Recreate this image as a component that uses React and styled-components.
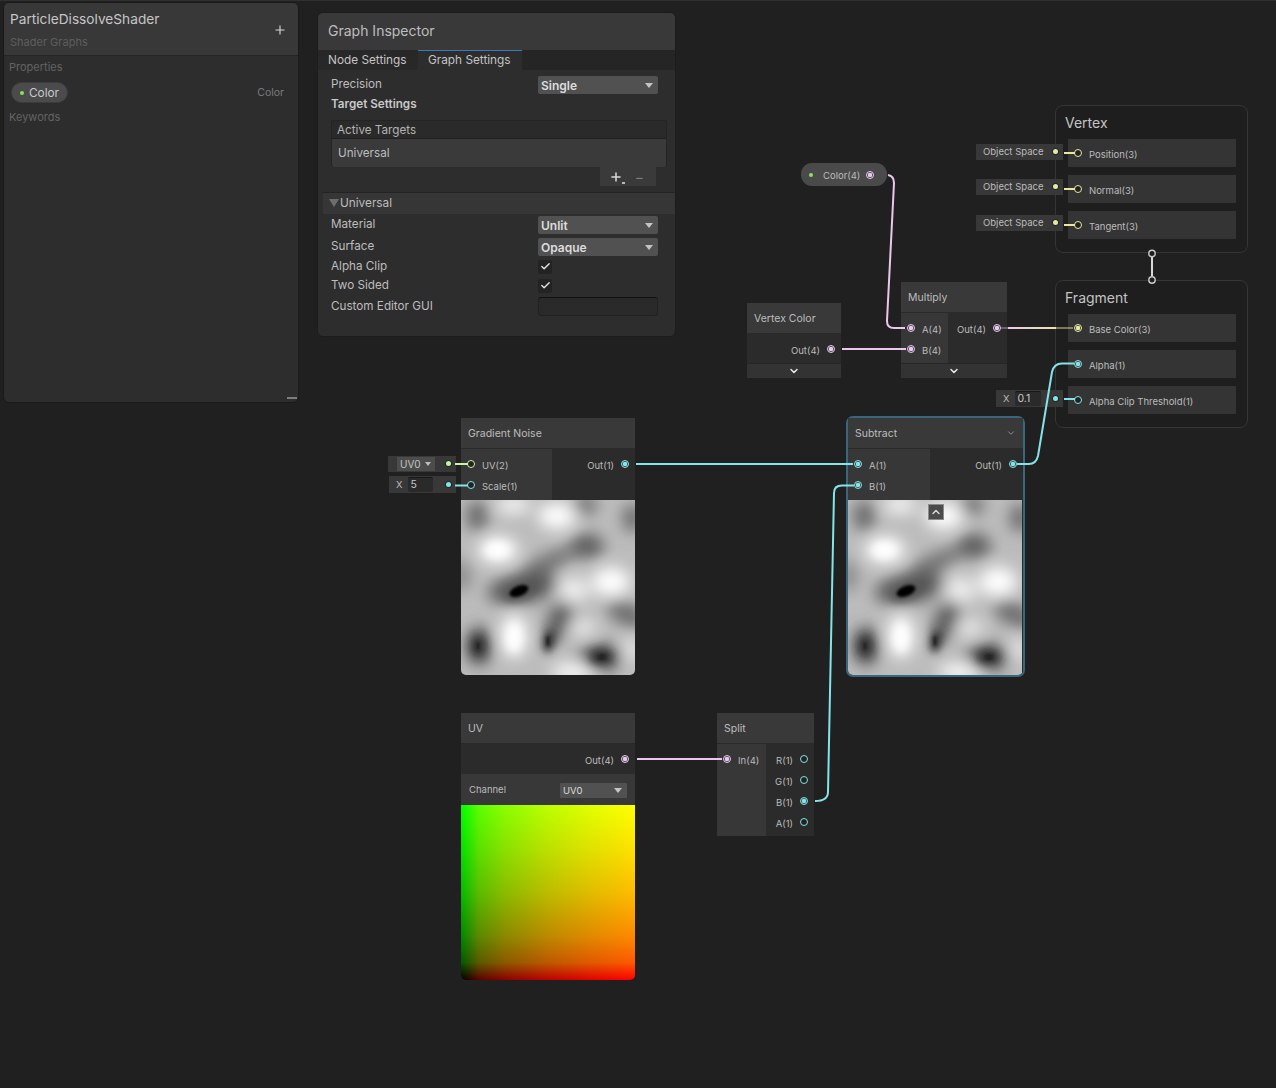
import React from 'react';
import styled, { createGlobalStyle } from 'styled-components';
import { Check, ChevronDown, ChevronUp, Plus } from 'lucide-react';

const PINK = '#ecc6ec';
const TEAL = '#84e4e7';
const YELLOW = '#e8e8a0';
const GREEN = '#cbf3a4';

const GlobalStyle = createGlobalStyle`
  html, body {
    margin: 0;
    background: #202020;
  }
  * {
    box-sizing: border-box;
  }
`;

const Canvas = styled.div`
  position: relative;
  width: 1276px;
  height: 1088px;
  overflow: hidden;
  background: #202020;
  border-top: 1px solid #2f2f2f;
  font-family: Inter, 'Noto Sans', sans-serif;
  color: #c4c4c4;
`;

const WireLayer = styled.svg`
  position: absolute;
  top: -1px;
  left: 0;
  z-index: 2;
  pointer-events: none;
`;

/* blackboard */
const Blackboard = styled.div`
  position: absolute;
  left: 3px;
  top: 1px;
  width: 296px;
  height: 401px;
  background: #2d2d2d;
  border: 1px solid #1a1a1a;
  border-radius: 6px;
  overflow: hidden;
  z-index: 3;
`;

const BoardHeader = styled.div`
  position: relative;
  height: 53px;
  padding: 7px 6px 0;
  background: #383838;
  border-bottom: 1px solid #252525;
`;

const BoardTitle = styled.div`
  font-size: 13.7px;
  line-height: 18px;
  color: #c6c6c6;
`;

const BoardSub = styled.div`
  margin-top: 7px;
  font-size: 11px;
  line-height: 14px;
  color: #5e5e5e;
`;

const AddButton = styled.div`
  position: absolute;
  right: 11px;
  top: 20px;
  display: flex;
  color: #d4d4d4;
`;

const SectionLabel = styled.div`
  margin-top: ${p => p.$top || 0}px;
  padding-left: 5px;
  font-size: 11px;
  line-height: 14px;
  color: #636363;
`;

const PropertyRow = styled.div`
  display: flex;
  align-items: center;
  justify-content: space-between;
  margin: 8px 0 7px;
  padding: 0 14px 0 7px;
`;

const Pill = styled.div`
  display: flex;
  align-items: center;
  gap: 5px;
  width: 57px;
  height: 21px;
  padding-left: 8px;
  border-radius: 11px;
  background: #4b4b4b;
  border: 1px solid #3c3c3c;
  font-size: 11.8px;
  color: #c9c9c9;
`;

const GreenDot = styled.span`
  width: 4px;
  height: 4px;
  border-radius: 50%;
  background: #8fe05e;
`;

const PropertyType = styled.span`
  font-size: 10.5px;
  color: #7a7a7a;
`;

const ResizeGrip = styled.div`
  position: absolute;
  right: 1px;
  bottom: 3px;
  width: 10px;
  height: 2px;
  background: #7c7c7c;
`;

/* graph inspector */
const Inspector = styled.div`
  position: absolute;
  left: 317px;
  top: 11px;
  width: 359px;
  height: 325px;
  background: #2d2d2d;
  border: 1px solid #1c1c1c;
  border-radius: 6px;
  overflow: hidden;
  z-index: 3;
`;

const InspectorHeader = styled.div`
  height: 37px;
  padding-left: 10px;
  background: #393939;
  font-size: 14px;
  line-height: 36px;
  color: #bdbdbd;
`;

const Tabs = styled.div`
  display: flex;
  height: 20px;
  background: #252525;
`;

const Tab = styled.div`
  width: ${p => p.$w}px;
  padding-left: 10px;
  font-size: 11.8px;
  line-height: 19px;
  color: #c4c4c4;
  background: ${p => (p.$active ? '#2d2d2d' : '#282828')};
  border-top: 1px solid ${p => (p.$active ? '#3a79bb' : 'transparent')};
`;

const Field = styled.div`
  display: grid;
  grid-template-columns: 207px 120px;
  align-items: center;
  height: ${p => p.$h || 18}px;
  margin-top: ${p => p.$top || 0}px;
  padding-left: 13px;
  font-size: 11.7px;
  color: #bdbdbd;
  & > span {
    margin-top: -2px;
  }
`;

const SectionTitle = styled.div`
  height: 20px;
  padding-left: 13px;
  font-size: 11.7px;
  font-weight: 600;
  line-height: 20px;
  color: #c8c8c8;
`;

const Dropdown = styled.div`
  display: flex;
  align-items: center;
  justify-content: space-between;
  height: 18px;
  padding: 0 4px 0 3px;
  background: #515151;
  border-radius: 2px;
  font-size: ${p => p.$size || 12}px;
  font-weight: ${p => p.$weight || 600};
  color: #dcdcdc;
`;

const Caret = styled.span`
  width: 0;
  height: 0;
  margin-right: 1px;
  border-left: 4px solid transparent;
  border-right: 4px solid transparent;
  border-top: 5px solid #c4c4c4;
`;

const TargetBox = styled.div`
  width: 336px;
  margin: 6px 0 0 13px;
  border-radius: 3px;
  overflow: hidden;
  border: 1px solid #242424;
  border-bottom: 0;
`;

const TargetHead = styled.div`
  height: 18px;
  padding-left: 5px;
  background: #2a2a2a;
  border-bottom: 1px solid #202020;
  font-size: 11.7px;
  line-height: 18px;
  color: #b4b4b4;
`;

const TargetItem = styled.div`
  height: 28px;
  padding-left: 6px;
  background: #3a3a3a;
  font-size: 11.7px;
  line-height: 28px;
  color: #bdbdbd;
`;

const TargetTools = styled.div`
  display: flex;
  align-items: center;
  justify-content: space-between;
  width: 56px;
  height: 19px;
  margin-left: 282px;
  padding: 0 12px 0 9px;
  background: #3a3a3a;
  color: #d8d8d8;
  font-size: 14px;
`;

const AddTarget = styled.span`
  position: relative;
  display: flex;
  &::after {
    content: '';
    position: absolute;
    right: -2px;
    bottom: 0;
    width: 3px;
    height: 2px;
    background: #b8b8b8;
  }
`;

const Minus = styled.span`
  color: #7c7c7c;
`;

const Foldout = styled.div`
  display: flex;
  align-items: center;
  gap: 1px;
  height: 22px;
  margin: 6px 0 2px 5px;
  padding: 0 0 1px 6px;
  background: #363636;
  border-top: 1px solid #232323;
  font-size: 11.8px;
  color: #bdbdbd;
`;

const FoldArrow = styled.span`
  width: 0;
  height: 0;
  border-left: 5px solid transparent;
  border-right: 5px solid transparent;
  border-top: 8px solid #6e6e6e;
`;

const CheckBox = styled.div`
  display: flex;
  align-items: center;
  justify-content: center;
  width: 14px;
  height: 14px;
  background: #232323;
  border-radius: 2px;
  color: #e4e4e4;
`;

const TextInput = styled.div`
  height: 19px;
  background: #2a2a2a;
  border: 1px solid #212121;
  border-top-color: #111;
  border-radius: 3px;
`;

/* nodes */
const Node = styled.div`
  position: absolute;
  left: ${p => p.$x}px;
  top: ${p => p.$y}px;
  width: ${p => p.$w}px;
  background: #2b2b2b;
  border-radius: ${p => (p.$round ? '0 0 5px 5px' : '0')};
  overflow: hidden;
  z-index: 1;
`;

const SelectFrame = styled.div`
  position: absolute;
  left: 846px;
  top: 414.5px;
  width: 179px;
  height: 261.5px;
  border: 2px solid #38677f;
  border-radius: 7px;
  z-index: 1;
`;

const NodeHeader = styled.div`
  display: flex;
  align-items: center;
  justify-content: space-between;
  height: 31px;
  padding: 0 7px;
  background: #393939;
  border-bottom: 1px solid #2a2a2a;
  font-size: 10.5px;
  color: #bcbcbc;
`;

const NodeBody = styled.div`
  display: flex;
  justify-content: space-between;
  height: ${p => p.$h}px;
`;

const InputCol = styled.div`
  width: ${p => p.$w}px;
  padding-top: 4.5px;
  background: #373737;
`;

const OutputCol = styled.div`
  flex: 1;
  padding-top: 4.5px;
  background: #2b2b2b;
`;

const PortRow = styled.div`
  display: flex;
  align-items: center;
  justify-content: ${p => (p.$out ? 'flex-end' : 'flex-start')};
  gap: 7px;
  height: 21px;
  padding: 2px 6px 0;
  font-size: 9.5px;
  color: #bcbcbc;
  & > span {
    margin-top: -2px;
  }
`;

const Port = styled.span`
  flex: none;
  width: 8px;
  height: 8px;
  border-radius: 50%;
  border: 1.5px solid ${p => p.$color};
  background: ${p =>
    p.$on
      ? `radial-gradient(circle, ${p.$color} 0 2px, #3a4a4c 2.4px)`
      : '#222'};
`;

const Collapse = styled.div`
  display: flex;
  align-items: center;
  justify-content: center;
  height: 15px;
  background: #333;
  border-top: 1px solid #262626;
  color: #e8e8e8;
`;

const Preview = styled.div`
  position: relative;
  display: flex;
  height: ${p => p.$h}px;
`;

const PreviewToggle = styled.div`
  position: absolute;
  left: 80px;
  top: 4px;
  display: flex;
  align-items: center;
  justify-content: center;
  width: 16px;
  height: 16px;
  background: #4b4b4b;
  border: 1px solid #8a8a8a;
  color: #d8d8d8;
`;

const ChannelRow = styled.div`
  display: flex;
  align-items: center;
  justify-content: space-between;
  height: 31px;
  padding: 0 8px;
  background: #383838;
  font-size: 9.5px;
  color: #bcbcbc;
`;

const ChannelSelect = styled(Dropdown)`
  width: 67px;
  height: 15px;
  margin-top: 1px;
  border-radius: 1px;
`;

const UvGradient = styled.div`
  height: 175px;
  background-image:
    linear-gradient(to right, #000, #590000 10%, #890000 25%, #bc0000 50%, #e10000 75%, #f00),
    linear-gradient(to top, #000, #005900 10%, #008900 25%, #00bc00 50%, #00e100 75%, #0f0);
  background-blend-mode: screen;
`;

/* pieces sticking out of the nodes */
const Chip = styled.div`
  position: absolute;
  left: ${p => p.$x}px;
  top: ${p => p.$y}px;
  display: flex;
  align-items: center;
  justify-content: space-between;
  width: ${p => p.$w}px;
  height: ${p => p.$h || 16}px;
  padding: 0 5px 1px ${p => p.$pad || 7}px;
  background: #383838;
  font-size: 9.5px;
  color: #bcbcbc;
  z-index: 1;
`;

const ChipField = styled.div`
  display: flex;
  align-items: center;
  gap: 6px;
`;

const ChipInput = styled.div`
  width: ${p => p.$w}px;
  height: 15px;
  padding-left: 2px;
  background: #2a2a2a;
  border-top: 1px solid #171717;
  border-radius: 2px;
  font-size: 10.5px;
  line-height: 14px;
  color: #c8c8c8;
`;

const ChipSelect = styled.div`
  display: flex;
  align-items: center;
  gap: 4px;
  width: 38px;
  height: 14px;
  padding-left: 3px;
  background: #4c4c4c;
  font-size: 10px;
  color: #c4c4c4;
`;

const SmallCaret = styled.span`
  width: 0;
  height: 0;
  border-left: 3.5px solid transparent;
  border-right: 3.5px solid transparent;
  border-top: 4px solid #bdbdbd;
`;

const ChipDot = styled.span`
  flex: none;
  width: 5px;
  height: 5px;
  border-radius: 50%;
  background: ${p => p.$color};
  box-shadow: 0 0 0 1px #1f2a2a;
`;

const PropertyNode = styled.div`
  position: absolute;
  left: 801px;
  top: 162px;
  display: flex;
  align-items: center;
  width: 86px;
  height: 23px;
  padding-left: 8px;
  background: #4a4a4a;
  border-radius: 11px;
  font-size: 9.5px;
  color: #bcbcbc;
  z-index: 1;
`;

const PropertyLabel = styled.span`
  margin: 2px 6px 0 10px;
`;

const Context = styled.div`
  position: absolute;
  left: 1055px;
  top: ${p => p.$y}px;
  width: 193px;
  height: 148px;
  padding-left: 12px;
  background: #1e1e1e;
  border: 1px solid #353535;
  border-radius: 8px;
  z-index: 0;
`;

const ContextTitle = styled.div`
  height: 33px;
  margin-left: -3px;
  font-size: 14px;
  line-height: 33px;
  color: #c4c4c4;
`;

const Slots = styled.div`
  display: flex;
  flex-direction: column;
  gap: 8px;
`;

const Slot = styled.div`
  display: flex;
  align-items: center;
  gap: 7px;
  width: 168px;
  height: 28px;
  padding-left: 6px;
  background: #343434;
  font-size: 9.5px;
  color: #bcbcbc;
`;

const SlotLabel = styled.span`
  margin-top: 2px;
`;

const Noise = ({ id }) => (
  <svg width="174" height="175" viewBox="0 0 174 175">
    <defs>
      <filter id={id} x="-30%" y="-30%" width="160%" height="160%">
        <feGaussianBlur stdDeviation="8" />
      </filter>
      <filter id={`${id}-mid`} x="-60%" y="-60%" width="220%" height="220%">
        <feGaussianBlur stdDeviation="4.5" />
      </filter>
      <filter id={`${id}-core`} x="-60%" y="-60%" width="220%" height="220%">
        <feGaussianBlur stdDeviation="1.8" />
      </filter>
    </defs>
    <rect width="174" height="175" fill="#bcbcbc" />
    <g filter={`url(#${id})`}>
      {/* soft grey folds */}
      <ellipse cx="16" cy="16" rx="11" ry="15" fill="#666" />
      <ellipse cx="124" cy="5" rx="12" ry="9" fill="#666" />
      <ellipse cx="172" cy="18" rx="10" ry="14" fill="#666" />
      <ellipse cx="126" cy="46" rx="17" ry="12" fill="#5a5a5a" />
      <ellipse cx="88" cy="62" rx="30" ry="8" fill="#6a6a6a" transform="rotate(-24 88 62)" />
      <ellipse cx="62" cy="88" rx="36" ry="15" fill="#5a5a5a" transform="rotate(-10 62 88)" />
      <ellipse cx="0" cy="76" rx="10" ry="16" fill="#8a8a8a" />
      <ellipse cx="166" cy="114" rx="22" ry="11" fill="#6a6a6a" transform="rotate(25 166 114)" />
      <ellipse cx="98" cy="120" rx="11" ry="24" fill="#5a5a5a" transform="rotate(22 98 120)" />
      <ellipse cx="18" cy="146" rx="13" ry="19" fill="#444" />
      <ellipse cx="140" cy="157" rx="22" ry="13" fill="#4a4a4a" />
      {/* bright patches */}
      <ellipse cx="37" cy="50" rx="20" ry="13" fill="#fff" />
      <ellipse cx="96" cy="16" rx="19" ry="13" fill="#fff" />
      <ellipse cx="52" cy="5" rx="17" ry="9" fill="#f4f4f4" />
      <ellipse cx="53" cy="136" rx="13" ry="22" fill="#fff" />
      <ellipse cx="150" cy="82" rx="19" ry="15" fill="#fff" />
      <ellipse cx="112" cy="90" rx="16" ry="13" fill="#eee" />
      <ellipse cx="112" cy="172" rx="22" ry="8" fill="#fff" />
      <ellipse cx="122" cy="128" rx="13" ry="9" fill="#e8e8e8" />
      <ellipse cx="170" cy="150" rx="9" ry="12" fill="#e8e8e8" />
    </g>
    <g filter={`url(#${id}-mid)`}>
      <ellipse cx="60" cy="91" rx="18" ry="8" fill="#555" transform="rotate(-20 60 91)" />
      <ellipse cx="17" cy="146" rx="6" ry="10" fill="#333" />
      <ellipse cx="88" cy="141" rx="6" ry="12" fill="#333" transform="rotate(12 88 141)" />
      <ellipse cx="140" cy="157" rx="11" ry="7" fill="#333" />
      <ellipse cx="36" cy="50" rx="11" ry="7" fill="#fff" />
      <ellipse cx="53" cy="138" rx="6" ry="13" fill="#fff" />
    </g>
    <g filter={`url(#${id}-core)`}>
      <ellipse cx="58" cy="91" rx="10" ry="5" fill="#000" transform="rotate(-22 58 91)" />
      <ellipse cx="17" cy="146" rx="2" ry="4" fill="#222" />
      <ellipse cx="87" cy="141" rx="2" ry="5" fill="#222" />
      <ellipse cx="141" cy="157" rx="5" ry="3" fill="#222" />
    </g>
  </svg>
);

const Wires = () => (
  <WireLayer width="1276" height="1088" fill="none" strokeWidth="2">
    <defs>
      <linearGradient id="baseColor" gradientUnits="userSpaceOnUse" x1="1008" y1="0" x2="1060" y2="0">
        <stop offset="0" stopColor={PINK} />
        <stop offset="1" stopColor={YELLOW} />
      </linearGradient>
    </defs>
    <path d="M888 175 Q894 176 894 183 L887 321 Q887 328 894 328 L905 328" stroke={PINK} />
    <path d="M842 349 L906 349" stroke={PINK} />
    <path d="M1008 328 L1056 328" stroke="url(#baseColor)" />
    <path d="M1056 328 L1073 328" stroke={YELLOW} strokeOpacity="0.45" />
    <path d="M1001 328 L1008 328" stroke={PINK} strokeOpacity="0.35" />
    <path d="M636 464 L853 464" stroke={TEAL} />
    <path d="M815 801 Q828 801 828 792 L834 493 Q834 485.5 842 485.5 L854 485.5" stroke={TEAL} />
    <path d="M1017 464 L1029 464 Q1036 464 1038 456 L1052 372 Q1054 363.5 1062 363.5 L1074 363.5" stroke={TEAL} />
    <path d="M637 759 L722 759" stroke={PINK} />
    <path d="M1064 153 L1075 153" stroke={YELLOW} />
    <path d="M1064 189 L1075 189" stroke={YELLOW} />
    <path d="M1064 225 L1075 225" stroke={YELLOW} />
    <path d="M1064 399 L1075 399" stroke={TEAL} />
    <path d="M455 464 L468 464" stroke={GREEN} />
    <path d="M455 485.5 L468 485.5" stroke={TEAL} />
    <path d="M1152 257 L1152 276" stroke="#d8d8d8" />
    <circle cx="1152" cy="253.5" r="3.2" fill="#1e1e1e" stroke="#c8c8c8" strokeWidth="1.4" />
    <circle cx="1152" cy="280" r="3.2" fill="#1e1e1e" stroke="#c8c8c8" strokeWidth="1.4" />
  </WireLayer>
);

const App = () => {
  return (
    <Canvas>
      <GlobalStyle />

      <Blackboard>
        <BoardHeader>
          <BoardTitle>ParticleDissolveShader</BoardTitle>
          <BoardSub>Shader Graphs</BoardSub>
          <AddButton>
            <Plus size={14} strokeWidth={2} />
          </AddButton>
        </BoardHeader>
        <SectionLabel $top={4}>Properties</SectionLabel>
        <PropertyRow>
          <Pill>
            <GreenDot />
            Color
          </Pill>
          <PropertyType>Color</PropertyType>
        </PropertyRow>
        <SectionLabel>Keywords</SectionLabel>
        <ResizeGrip />
      </Blackboard>

      <Inspector>
        <InspectorHeader>Graph Inspector</InspectorHeader>
        <Tabs>
          <Tab $w={100}>Node Settings</Tab>
          <Tab $w={104} $active>Graph Settings</Tab>
        </Tabs>
        <Field $top={6}>
          <span>Precision</span>
          <Dropdown>Single<Caret /></Dropdown>
        </Field>
        <SectionTitle>Target Settings</SectionTitle>
        <TargetBox>
          <TargetHead>Active Targets</TargetHead>
          <TargetItem>Universal</TargetItem>
        </TargetBox>
        <TargetTools>
          <AddTarget><Plus size={14} strokeWidth={2.6} /></AddTarget>
          <Minus>−</Minus>
        </TargetTools>
        <Foldout>
          <FoldArrow />
          Universal
        </Foldout>
        <Field>
          <span>Material</span>
          <Dropdown>Unlit<Caret /></Dropdown>
        </Field>
        <Field $top={4}>
          <span>Surface</span>
          <Dropdown>Opaque<Caret /></Dropdown>
        </Field>
        <Field $h={19} $top={1}>
          <span>Alpha Clip</span>
          <CheckBox><Check size={11} strokeWidth={3} /></CheckBox>
        </Field>
        <Field $h={19}>
          <span>Two Sided</span>
          <CheckBox><Check size={11} strokeWidth={3} /></CheckBox>
        </Field>
        <Field $h={19} $top={2}>
          <span>Custom Editor GUI</span>
          <TextInput />
        </Field>
      </Inspector>

      <Context $y={104}>
        <ContextTitle>Vertex</ContextTitle>
        <Slots>
          <Slot><Port $color={YELLOW} /><SlotLabel>Position(3)</SlotLabel></Slot>
          <Slot><Port $color={YELLOW} /><SlotLabel>Normal(3)</SlotLabel></Slot>
          <Slot><Port $color={YELLOW} /><SlotLabel>Tangent(3)</SlotLabel></Slot>
        </Slots>
      </Context>
      <Context $y={279}>
        <ContextTitle>Fragment</ContextTitle>
        <Slots>
          <Slot><Port $color={YELLOW} $on /><SlotLabel>Base Color(3)</SlotLabel></Slot>
          <Slot><Port $color={TEAL} $on /><SlotLabel>Alpha(1)</SlotLabel></Slot>
          <Slot><Port $color={TEAL} /><SlotLabel>Alpha Clip Threshold(1)</SlotLabel></Slot>
        </Slots>
      </Context>

      <Chip $x={976} $y={143} $w={87}>Object Space<ChipDot $color={YELLOW} /></Chip>
      <Chip $x={976} $y={178} $w={87}>Object Space<ChipDot $color={YELLOW} /></Chip>
      <Chip $x={976} $y={214} $w={87}>Object Space<ChipDot $color={YELLOW} /></Chip>
      <Chip $x={996} $y={389} $w={67} $h={17}>
        <ChipField>
          X
          <ChipInput $w={26}>0.1</ChipInput>
        </ChipField>
        <ChipDot $color={TEAL} />
      </Chip>

      <PropertyNode>
        <GreenDot />
        <PropertyLabel>Color(4)</PropertyLabel>
        <Port $color={PINK} $on />
      </PropertyNode>

      <Node $x={747} $y={302} $w={94}>
        <NodeHeader>Vertex Color</NodeHeader>
        <NodeBody $h={29}>
          <OutputCol>
            <PortRow $out>Out(4)<Port $color={PINK} $on /></PortRow>
          </OutputCol>
        </NodeBody>
        <Collapse><ChevronDown size={12} strokeWidth={3} /></Collapse>
      </Node>

      <Node $x={901} $y={281} $w={106}>
        <NodeHeader>Multiply</NodeHeader>
        <NodeBody $h={50}>
          <InputCol $w={47}>
            <PortRow><Port $color={PINK} $on />A(4)</PortRow>
            <PortRow><Port $color={PINK} $on />B(4)</PortRow>
          </InputCol>
          <OutputCol>
            <PortRow $out>Out(4)<Port $color={PINK} $on /></PortRow>
          </OutputCol>
        </NodeBody>
        <Collapse><ChevronDown size={12} strokeWidth={3} /></Collapse>
      </Node>

      <Chip $x={388} $y={455} $w={68} $pad={9}>
        <ChipSelect>UV0<SmallCaret /></ChipSelect>
        <ChipDot $color={GREEN} />
      </Chip>
      <Chip $x={389} $y={475} $w={67} $h={17}>
        <ChipField>
          X
          <ChipInput $w={25}>5</ChipInput>
        </ChipField>
        <ChipDot $color={TEAL} />
      </Chip>

      <Node $x={461} $y={417} $w={174} $round>
        <NodeHeader>Gradient Noise</NodeHeader>
        <NodeBody $h={51}>
          <InputCol $w={91}>
            <PortRow><Port $color={GREEN} />UV(2)</PortRow>
            <PortRow><Port $color={TEAL} />Scale(1)</PortRow>
          </InputCol>
          <OutputCol>
            <PortRow $out>Out(1)<Port $color={TEAL} $on /></PortRow>
          </OutputCol>
        </NodeBody>
        <Preview $h={175}><Noise id="noiseA" /></Preview>
      </Node>

      <SelectFrame />
      <Node $x={848} $y={417} $w={175} $round>
        <NodeHeader>
          Subtract
          <ChevronDown size={10} strokeWidth={1.5} />
        </NodeHeader>
        <NodeBody $h={51}>
          <InputCol $w={82}>
            <PortRow><Port $color={TEAL} $on />A(1)</PortRow>
            <PortRow><Port $color={TEAL} $on />B(1)</PortRow>
          </InputCol>
          <OutputCol>
            <PortRow $out>Out(1)<Port $color={TEAL} $on /></PortRow>
          </OutputCol>
        </NodeBody>
        <Preview $h={175}>
          <Noise id="noiseB" />
          <PreviewToggle><ChevronUp size={12} strokeWidth={3} /></PreviewToggle>
        </Preview>
      </Node>

      <Node $x={461} $y={712} $w={174} $round>
        <NodeHeader>UV</NodeHeader>
        <NodeBody $h={30}>
          <OutputCol>
            <PortRow $out>Out(4)<Port $color={PINK} $on /></PortRow>
          </OutputCol>
        </NodeBody>
        <ChannelRow>
          Channel
          <ChannelSelect $size={9.5} $weight={400}>UV0<Caret /></ChannelSelect>
        </ChannelRow>
        <UvGradient />
      </Node>

      <Node $x={717} $y={712} $w={97}>
        <NodeHeader>Split</NodeHeader>
        <NodeBody $h={92}>
          <InputCol $w={49}>
            <PortRow><Port $color={PINK} $on />In(4)</PortRow>
          </InputCol>
          <OutputCol>
            <PortRow $out>R(1)<Port $color={TEAL} /></PortRow>
            <PortRow $out>G(1)<Port $color={TEAL} /></PortRow>
            <PortRow $out>B(1)<Port $color={TEAL} $on /></PortRow>
            <PortRow $out>A(1)<Port $color={TEAL} /></PortRow>
          </OutputCol>
        </NodeBody>
      </Node>

      <Wires />
    </Canvas>
  );
};

export default App;
